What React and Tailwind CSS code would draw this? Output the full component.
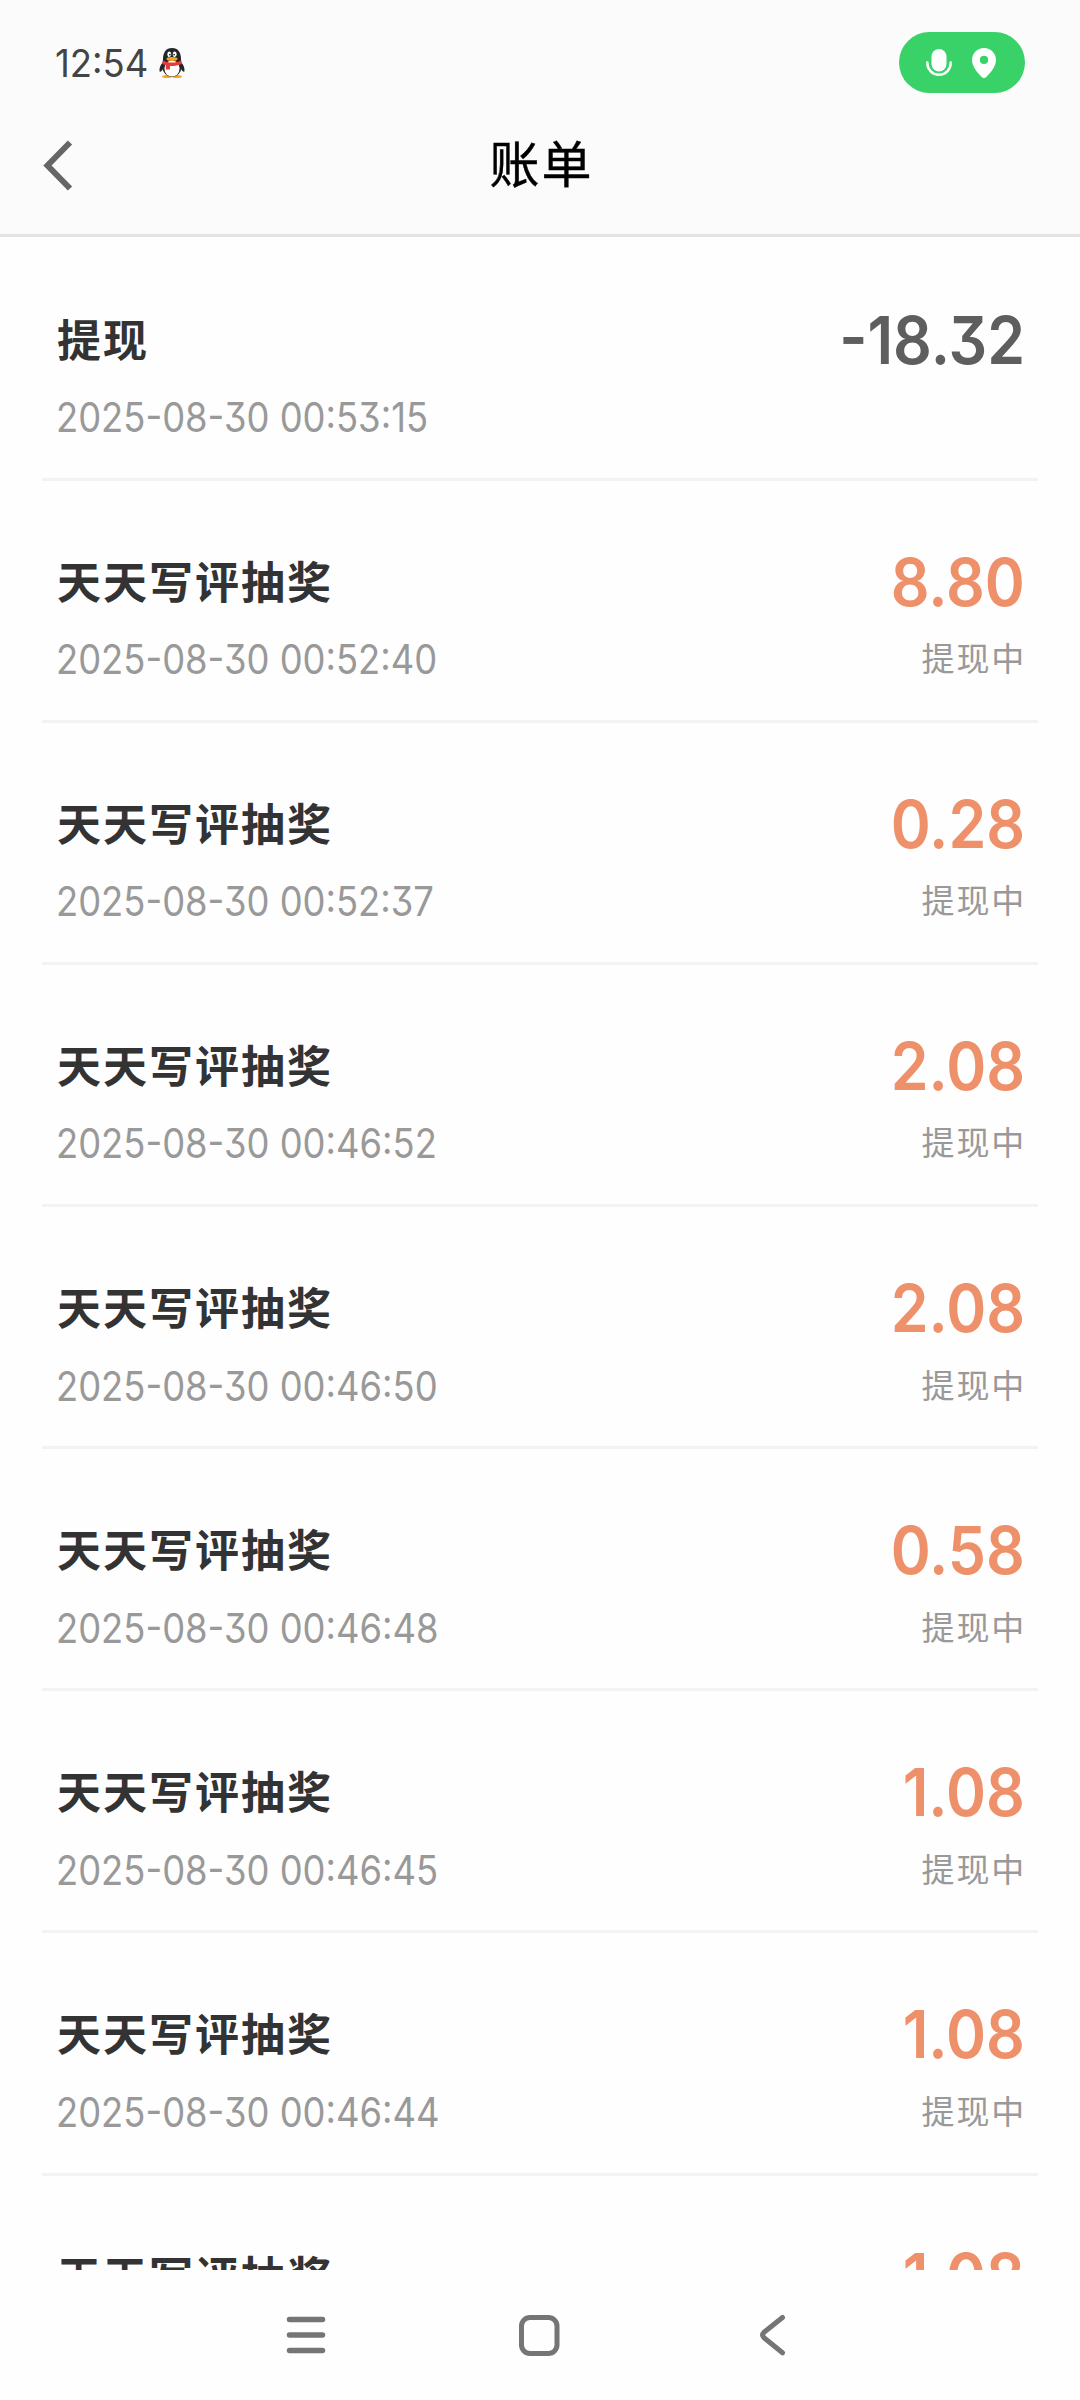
import React from 'react'

const bills = [
  { title: '提现', time: '2025-08-30 00:53:15', amount: '-18.32' },
  { title: '天天写评抽奖', time: '2025-08-30 00:52:40', amount: '8.80', status: '提现中' },
  { title: '天天写评抽奖', time: '2025-08-30 00:52:37', amount: '0.28', status: '提现中' },
  { title: '天天写评抽奖', time: '2025-08-30 00:46:52', amount: '2.08', status: '提现中' },
  { title: '天天写评抽奖', time: '2025-08-30 00:46:50', amount: '2.08', status: '提现中' },
  { title: '天天写评抽奖', time: '2025-08-30 00:46:48', amount: '0.58', status: '提现中' },
  { title: '天天写评抽奖', time: '2025-08-30 00:46:45', amount: '1.08', status: '提现中' },
  { title: '天天写评抽奖', time: '2025-08-30 00:46:44', amount: '1.08', status: '提现中' },
  { title: '天天写评抽奖', amount: '1.08' },
]

function PenguinIcon() {
  return (
    <svg width="26" height="30" viewBox="0 0 26 30">
      <ellipse cx="8" cy="28.5" rx="5" ry="1.6" fill="#f5a81c" />
      <ellipse cx="18" cy="28.5" rx="5" ry="1.6" fill="#f5a81c" />
      <path d="M4 14C1.5 17 0 20 .6 23.5c.8.8 2.4-.8 3.4-2.5zM22 14c2.5 3 4 6 3.4 9.5-.8.8-2.4-.8-3.4-2.5z" fill="#222529" />
      <ellipse cx="13" cy="19" rx="9.5" ry="10" fill="#222529" />
      <path d="M4 13C3.5 4.5 7 0 13 0s9.5 4.5 9 13z" fill="#222529" />
      <ellipse cx="13" cy="20.5" rx="7.6" ry="8" fill="#fff" />
      <ellipse cx="10.3" cy="6.3" rx="1.9" ry="2.8" fill="#fff" />
      <ellipse cx="15.7" cy="6.3" rx="1.9" ry="2.8" fill="#fff" />
      <circle cx="10.9" cy="6.6" r="0.9" fill="#222529" />
      <circle cx="15.1" cy="6.6" r="0.9" fill="#222529" />
      <ellipse cx="13" cy="11" rx="5.5" ry="1.9" fill="#f5a81c" />
      <path d="M3.6 12.5c5.5 2.7 13.3 2.7 18.8 0l.6 3.2c-4 1.9-8 2.5-12 2.3v3.5H6.8V17c-1.4-.4-2.6-.8-3.8-1.3z" fill="#e8393f" />
    </svg>
  )
}

function MicIcon() {
  return (
    <svg width="26" height="28" viewBox="0 0 26 28">
      <rect x="5.5" y="0" width="15" height="22.5" rx="7.5" fill="#fff" />
      <path d="M1.3 13.5v.5a11.7 11.7 0 0 0 23.4 0v-.5" fill="none" stroke="#fff" strokeWidth="2.5" strokeLinecap="round" />
    </svg>
  )
}

function PinIcon() {
  return (
    <svg width="24" height="30" viewBox="0 0 24 30">
      <path
        fillRule="evenodd"
        d="M12 0C5.2 0 0 5.2 0 11.8 0 18.5 4.8 24 10 29.2c1.2 1.1 2.8 1.1 4 0C19.2 24 24 18.5 24 11.8 24 5.2 18.8 0 12 0zm0 7.8a4.1 4.1 0 1 1 0 8.2 4.1 4.1 0 0 1 0-8.2z"
        fill="#fff"
      />
    </svg>
  )
}

function StatusBar() {
  return (
    <div className="flex h-[125px] items-center justify-between px-[55px]">
      <div className="flex items-center">
        <span className="w-[104px] origin-left scale-x-[0.96] text-[38px] leading-[38px] text-[#444]">12:54</span>
        <PenguinIcon />
      </div>
      <div className="flex h-[61px] w-[126px] items-center justify-center gap-[20px] rounded-full bg-[#38d268] pr-[2px]">
        <MicIcon />
        <PinIcon />
      </div>
    </div>
  )
}

function TitleBar() {
  return (
    <div className="grid h-[109px] grid-cols-[1fr_auto_1fr] items-start">
      <svg className="mt-[15px] ml-[43px]" width="30" height="51" viewBox="0 0 30 51" fill="none" stroke="#666" strokeWidth="6">
        <path d="M27 2.5L4.5 25.5 27 48.5" />
      </svg>
      <h1 className="mt-[11px] pl-[3px] font-['Noto_Sans_CJK_SC',sans-serif] text-[50px] leading-[50px] font-normal tracking-[2px] text-black [-webkit-text-stroke:0.4px_black]">
        账单
      </h1>
      <span />
    </div>
  )
}

function BillRow({ title, time, amount, status }) {
  const isExpense = amount.startsWith('-')

  return (
    <li className="flex h-[242.14px] shrink-0 justify-between border-b-[3px] border-[#f3f3f3] pr-[13px] pl-[15px]">
      <div className="pt-[77px]">
        <div className="font-['Noto_Sans_CJK_SC',sans-serif] text-[44px] leading-[44px] font-bold tracking-[2px] text-[#333]">
          {title}
        </div>
        {time && (
          <div className="mt-[38.5px] -ml-[1px] origin-left scale-x-[0.898] text-[40.5px] leading-[40px] font-normal whitespace-nowrap text-[#999]">
            {time}
          </div>
        )}
      </div>
      <div className="flex flex-col items-end pt-[68px]">
        <div
          className={`origin-right scale-x-[0.92] text-[66px] leading-[66px] font-semibold whitespace-nowrap ${
            isExpense ? 'text-[#5e5e5e]' : 'text-[#ee9069]'
          }`}
        >
          {amount}
        </div>
        {status && (
          <div className="mt-[26.5px] -mr-[1px] font-['Noto_Sans_CJK_SC',sans-serif] text-[33px] leading-[33px] tracking-[1.8px] text-[#999]">
            {status}
          </div>
        )}
      </div>
    </li>
  )
}

function NavBar() {
  return (
    <nav className="flex h-[130px] items-center pl-[286px]">
      <svg width="40" height="42" viewBox="0 0 40 42" fill="none" stroke="#757575" strokeWidth="5.5" strokeLinecap="round">
        <path d="M3.5 5.5H36.5M3.5 21H36.5M3.5 36.5H36.5" />
      </svg>
      <svg className="ml-[192px]" width="42" height="42" viewBox="0 0 42 42" fill="none" stroke="#757575" strokeWidth="5">
        <rect x="3.5" y="3.5" width="35.5" height="36" rx="8.5" />
      </svg>
      <svg className="ml-[199px]" width="28" height="42" viewBox="0 0 28 42" fill="none" stroke="#757575" strokeWidth="5" strokeLinecap="round" strokeLinejoin="round">
        <path d="M23.5 3.5L5 18.3Q2.3 21 5 23.7L23.5 38.8" />
      </svg>
    </nav>
  )
}

export default function App() {
  return (
    <div className="flex h-[2400px] w-[1080px] flex-col overflow-hidden bg-[#fefefe] font-['Inter','Noto_Sans_CJK_SC',sans-serif] [font-feature-settings:'cv09','case']">
      <header className="h-[237px] shrink-0 border-b-[3px] border-[#e3e3e3] bg-[#fbfbfb]">
        <StatusBar />
        <TitleBar />
      </header>
      <ul className="mx-[42px] flex h-[2033px] shrink-0 flex-col overflow-hidden pt-[1.6px]">
        {bills.map((bill, i) => (
          <BillRow key={i} {...bill} />
        ))}
      </ul>
      <NavBar />
    </div>
  )
}
